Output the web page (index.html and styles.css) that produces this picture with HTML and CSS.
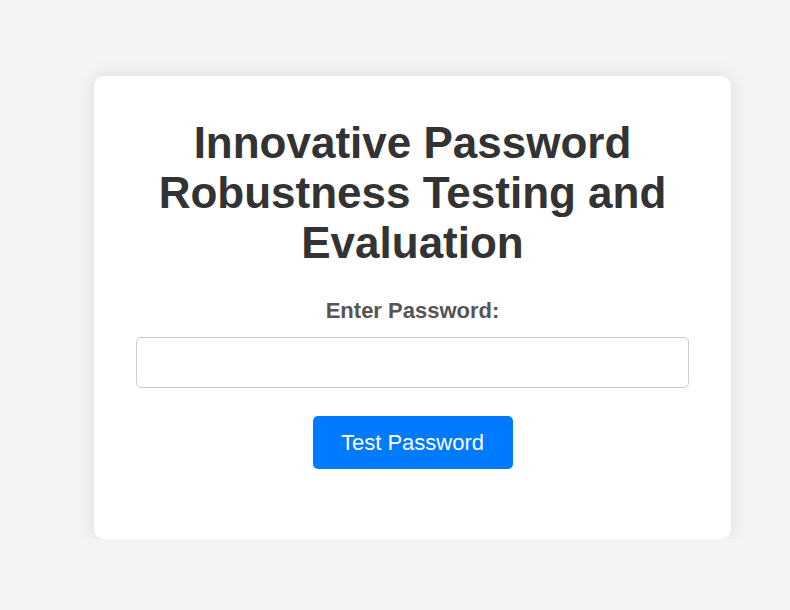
FILE: index.html
```html
<!DOCTYPE html>
<html lang="en">
<head>
<meta charset="utf-8">
<title>Innovative Password Robustness Testing and Evaluation</title>
<link rel="stylesheet" href="styles.css">
</head>
<body>
<main class="card">
  <h1 class="title">Innovative Password Robustness Testing and Evaluation</h1>
  <label class="label" for="pw">Enter Password:</label>
  <input class="input" id="pw" type="password">
  <button class="btn" type="button">Test Password</button>
</main>
</body>
</html>
```
FILE: styles.css
```css
html, body {
  margin: 0;
  padding: 0;
  background: #f4f4f4;
  font-family: "Liberation Sans", Arial, sans-serif;
}
body {
  padding: 76px 0 0 94px;
}
.card {
  box-sizing: border-box;
  width: 637px;
  height: 463px;
  background: #fff;
  border-radius: 10px;
  box-shadow: 0 0 20px rgba(0, 0, 0, 0.1);
  padding: 42px 42px;
  display: flex;
  flex-direction: column;
  align-items: center;
}
.title {
  margin: 0;
  font-size: 44px;
  line-height: 50px;
  font-weight: bold;
  color: #333;
  text-align: center;
}
.label {
  margin-top: 30px;
  font-size: 22px;
  font-weight: bold;
  color: #555;
}
.input {
  box-sizing: border-box;
  margin-top: 13px;
  width: 100%;
  height: 51px;
  border: 1px solid #ccc;
  border-radius: 5px;
  padding: 0 12px;
  font-size: 20px;
  outline: none;
}
.btn {
  margin-top: 28px;
  width: 200px;
  height: 53px;
  border: none;
  border-radius: 5px;
  background: #007bff;
  color: #fff;
  font-family: "Liberation Sans", Arial, sans-serif;
  font-size: 22px;
}
```
